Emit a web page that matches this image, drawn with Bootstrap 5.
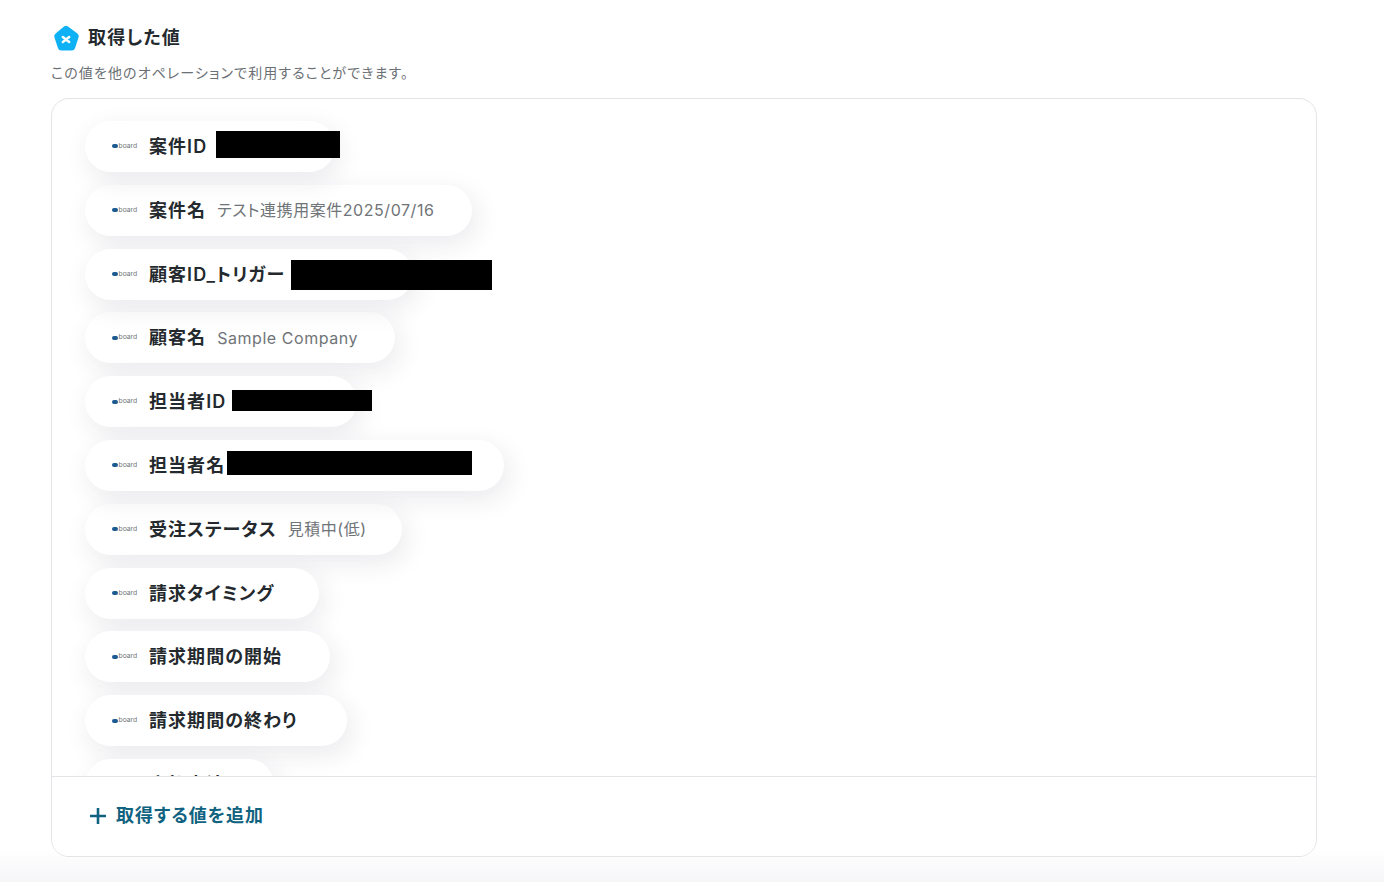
<!DOCTYPE html>
<html lang="ja">
<head>
  <meta charset="UTF-8" />
  <meta name="viewport" content="width=device-width, initial-scale=1" />
  <title>取得した値</title>
  <link href="https://cdn.jsdelivr.net/npm/bootstrap@5.3.0/dist/css/bootstrap.min.css" rel="stylesheet" />
  <style>
    html, body { height: 100%; }
    body {
      font-family: Inter, "Noto Sans CJK JP", sans-serif;
      font-feature-settings: "palt";
      color: #24292e;
      overflow: hidden;
      background: linear-gradient(to bottom, #fff 0, #fff 850px, #f6f5f8 882px);
    }
    .page-wrap { padding: 0 67px 0 51px; }
    .head-row { height: 32px; margin-top: 21px; padding-left: 1px; }
    .head-icon { margin-top: 3px; }
    .head-title { font-size: 18px; font-weight: 600; letter-spacing: 1.2px; margin-left: 8px; }
    .head-sub { font-size: 14px; color: #6b7074; letter-spacing: 1.1px; margin: 10px 0 15px; line-height: 20px; }
    .value-card { height: 759px; border: 1px solid #e4e4e8; border-radius: 18px; background: #fff; overflow: hidden; }
    .value-list { padding: 22px 0 0 33px; overflow: hidden; gap: 12.8px; }
    .value-pill {
      height: 51px;
      flex: none;
      border-radius: 26px;
      background: #fff;
      box-shadow: 4px 8px 26px rgba(50, 40, 70, .1);
      padding-left: 27px;
    }
    .logo-mark { width: 25px; flex: none; margin-right: 12px; }
    .logo-blob { width: 6px; height: 4px; border-radius: 2px; background: #1c5a90; flex: none; }
    .logo-word { font-size: 6.8px; line-height: 1; color: #70757b; margin-left: .5px; }
    .pill-label { font-size: 18px; font-weight: 600; letter-spacing: 1.05px; white-space: nowrap; }
    .pill-value { font-size: 16px; color: #6f7478; letter-spacing: .55px; margin-left: 11px; white-space: nowrap; }
    .w-335 { width: 250px; }
    .w-472 { width: 387px; }
    .w-413 { width: 328px; }
    .w-395 { width: 310px; }
    .w-357 { width: 272px; }
    .w-504 { width: 419px; }
    .w-402 { width: 317px; }
    .w-319 { width: 234px; }
    .w-330 { width: 245px; }
    .w-347 { width: 262px; }
    .w-274 { width: 189px; }
    .redact { position: absolute; background: #000; }
    .redact-a { left: 131px; top: 10px; width: 124px; height: 27px; }
    .redact-b { left: 206px; top: 11px; width: 201px; height: 30px; }
    .redact-c { left: 147px; top: 14px; width: 140px; height: 21px; }
    .redact-d { left: 142px; top: 11px; width: 245px; height: 24px; }
    .add-row { height: 80px; border-top: 1px solid #e4e4e8; padding: 0 0 2px 37px; background: #fff; color: #0f6280; flex: none; }
    .add-text { font-size: 18px; font-weight: 600; letter-spacing: 1px; margin-left: 9px; }
  </style>
</head>
<body>
<div class="page-wrap">
  <div class="head-row d-flex align-items-center">
    <svg class="head-icon" width="28" height="28" viewBox="0 0 28 28">
      <path d="M12 1.6a3.4 3.4 0 0 1 4 0l9.4 6.8a3.4 3.4 0 0 1 1.2 3.8l-3.6 11a3.4 3.4 0 0 1-3.2 2.4H9.2A3.4 3.4 0 0 1 6 23.2l-3.6-11a3.4 3.4 0 0 1 1.2-3.8z" fill="#0fb1f5"/>
      <path d="M10.800 12l6.400 5M17.200 12l-6.400 5" fill="none" stroke="#fff" stroke-width="2.400" stroke-linecap="round"/>
    </svg>
    <span class="head-title">取得した値</span>
  </div>
  <p class="head-sub">この値を他のオペレーションで利用することができます。</p>

  <div class="value-card d-flex flex-column">
    <div class="value-list d-flex flex-column align-items-start flex-grow-1">
      <div class="value-pill w-335 d-flex align-items-center position-relative">
        <span class="logo-mark d-flex align-items-center"><span class="logo-blob"></span><span class="logo-word">board</span></span>
        <span class="pill-label">案件ID</span>
        <span class="redact redact-a"></span>
      </div>
      <div class="value-pill w-472 d-flex align-items-center">
        <span class="logo-mark d-flex align-items-center"><span class="logo-blob"></span><span class="logo-word">board</span></span>
        <span class="pill-label">案件名</span><span class="pill-value">テスト連携用案件2025/07/16</span>
      </div>
      <div class="value-pill w-413 d-flex align-items-center position-relative">
        <span class="logo-mark d-flex align-items-center"><span class="logo-blob"></span><span class="logo-word">board</span></span>
        <span class="pill-label">顧客ID_トリガー</span>
        <span class="redact redact-b"></span>
      </div>
      <div class="value-pill w-395 d-flex align-items-center">
        <span class="logo-mark d-flex align-items-center"><span class="logo-blob"></span><span class="logo-word">board</span></span>
        <span class="pill-label">顧客名</span><span class="pill-value">Sample Company</span>
      </div>
      <div class="value-pill w-357 d-flex align-items-center position-relative">
        <span class="logo-mark d-flex align-items-center"><span class="logo-blob"></span><span class="logo-word">board</span></span>
        <span class="pill-label">担当者ID</span>
        <span class="redact redact-c"></span>
      </div>
      <div class="value-pill w-504 d-flex align-items-center position-relative">
        <span class="logo-mark d-flex align-items-center"><span class="logo-blob"></span><span class="logo-word">board</span></span>
        <span class="pill-label">担当者名</span>
        <span class="redact redact-d"></span>
      </div>
      <div class="value-pill w-402 d-flex align-items-center">
        <span class="logo-mark d-flex align-items-center"><span class="logo-blob"></span><span class="logo-word">board</span></span>
        <span class="pill-label">受注ステータス</span><span class="pill-value">見積中(低)</span>
      </div>
      <div class="value-pill w-319 d-flex align-items-center">
        <span class="logo-mark d-flex align-items-center"><span class="logo-blob"></span><span class="logo-word">board</span></span>
        <span class="pill-label">請求タイミング</span>
      </div>
      <div class="value-pill w-330 d-flex align-items-center">
        <span class="logo-mark d-flex align-items-center"><span class="logo-blob"></span><span class="logo-word">board</span></span>
        <span class="pill-label">請求期間の開始</span>
      </div>
      <div class="value-pill w-347 d-flex align-items-center">
        <span class="logo-mark d-flex align-items-center"><span class="logo-blob"></span><span class="logo-word">board</span></span>
        <span class="pill-label">請求期間の終わり</span>
      </div>
      <div class="value-pill w-274 d-flex align-items-center">
        <span class="logo-mark d-flex align-items-center"><span class="logo-blob"></span><span class="logo-word">board</span></span>
        <span class="pill-label">支払方法</span>
      </div>
    </div>
    <div class="add-row d-flex align-items-center">
      <svg width="18" height="18" viewBox="0 0 18 18"><path d="M9 1v16M1 9h16" stroke="#0f6280" stroke-width="2.600"/></svg>
      <span class="add-text">取得する値を追加</span>
    </div>
  </div>
</div>
<script src="https://cdn.jsdelivr.net/npm/bootstrap@5.3.0/dist/js/bootstrap.bundle.min.js"></script>
</body>
</html>
